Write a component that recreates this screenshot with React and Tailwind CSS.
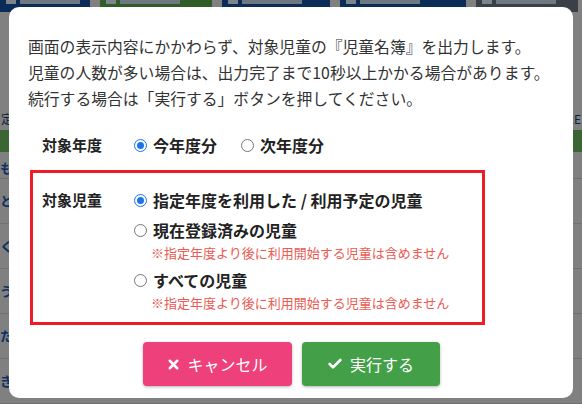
import { Check, X } from 'lucide-react';

const font = { fontFamily: '"Noto Sans CJK JP", "Noto Sans", sans-serif' };

const Radio = ({ checked, label, note }) => (
  <div className="flex flex-col">
    <label className="flex items-center gap-[6px] h-[26px]">
      {checked ? (
        <span className="w-[13px] h-[13px] rounded-full border-[1.5px] border-[#1a73e8] flex items-center justify-center">
          <span className="w-[7px] h-[7px] rounded-full bg-[#1a73e8]"></span>
        </span>
      ) : (
        <span className="w-[13px] h-[13px] rounded-full border border-[#767676] bg-white"></span>
      )}
      <span className="text-[16px] font-bold text-[#222]">{label}</span>
    </label>
    {note && (
      <p className="pl-[17px] text-[13px] leading-[20px] text-[#ec5a52]">{note}</p>
    )}
  </div>
);

// page behind the modal, already dimmed
const Backdrop = () => {
  const tabs = [
    { w: 'w-[90px]', bg: 'bg-[#0b2c58]' },
    { w: 'w-[112px]', bg: 'bg-[#2f5c27]' },
    { w: 'w-[108px]', bg: 'bg-[#0b2c58]' },
    { w: 'w-[126px]', bg: 'bg-[#0b2c58]' },
    { w: 'w-[102px]', bg: 'bg-[#3a4046]' },
  ];
  const rows = ['と', 'く', 'う', 'た', 'き'];
  return (
    <div className="h-[404px] bg-[#808080] overflow-hidden">
      <div className="flex gap-[10px] h-[12px] overflow-hidden">
        {tabs.map((tab, i) => (
          <div key={i} className={`${tab.w} ${tab.bg} shrink-0 h-[12px] flex items-start gap-[4px] px-[6px] overflow-hidden`}>
            <span className="w-[10px] h-[4px] bg-[#7d848c] shrink-0"></span>
            <span className="w-[60px] h-[4px] bg-[#6f7780] shrink-0"></span>
          </div>
        ))}
      </div>
      <div className="h-[98px]"></div>
      <div className="h-[20px] text-[12px] text-[#0a1f3a] px-[1px] flex justify-between"><span>定</span><span>2E</span></div>
      <div className="h-[22px] bg-[#3b6634]"></div>
      <div className="h-[27px] border-b border-[#707070] text-[13px] text-[#0d2f60] font-bold flex items-end pb-[1px]">も</div>
      {rows.map((c, i) => (
        <div key={i} className="h-[45px] border-b border-[#707070] text-[13px] text-[#0d2f60] flex items-center font-bold">
          {c}
        </div>
      ))}
    </div>
  );
};

export default function App() {
  return (
    <div className="relative w-[582px] h-[404px] overflow-hidden" style={font}>
      <Backdrop />

      {/* modal */}
      <div className="absolute left-[9px] top-[7px] w-[564px] h-[391px] bg-white rounded-[10px] pt-[27px] pl-[19px] pr-[10px]">
        <div className="text-[15.8px] leading-[26px] text-[#333]">
          <p>画面の表示内容にかかわらず、対象児童の『児童名簿』を出力します。</p>
          <p>児童の人数が多い場合は、出力完了まで10秒以上かかる場合があります。</p>
          <p>続行する場合は「実行する」ボタンを押してください。</p>
        </div>

        <div className="flex items-center h-[26px] mt-[20px] pl-[14px]">
          <span className="w-[92px] text-[15px] font-bold text-[#222]">対象年度</span>
          <div className="flex gap-[24px]">
            <Radio checked label="今年度分" />
            <Radio label="次年度分" />
          </div>
        </div>

        <div className="mt-[12px] ml-[2px] w-[455px] h-[155px] border-[3px] border-[#ee1c25] pt-[14px] pl-[9px]">
          <div className="flex">
            <span className="w-[92px] h-[26px] leading-[26px] text-[15px] font-bold text-[#222]">対象児童</span>
            <div className="flex flex-col gap-[4px]">
              <Radio checked label="指定年度を利用した / 利用予定の児童" />
              <Radio label="現在登録済みの児童" note="※指定年度より後に利用開始する児童は含めません" />
              <Radio label="すべての児童" note="※指定年度より後に利用開始する児童は含めません" />
            </div>
          </div>
        </div>

        <div className="flex justify-center gap-[10px] mt-[17px] pr-[9px]">
          <button className="w-[149px] h-[44px] rounded-[4px] bg-[#ee407b] text-white text-[16px] flex items-center justify-center gap-[6px] shadow-[0_1px_3px_rgba(0,0,0,0.3)]">
            <X className="w-[15px] h-[15px]" strokeWidth={4} />
            キャンセル
          </button>
          <button className="w-[138px] h-[44px] rounded-[4px] bg-[#43a049] text-white text-[16px] flex items-center justify-center gap-[7px] shadow-[0_1px_3px_rgba(0,0,0,0.3)]">
            <Check className="w-[16px] h-[16px]" strokeWidth={4} />
            実行する
          </button>
        </div>
      </div>
    </div>
  );
}
